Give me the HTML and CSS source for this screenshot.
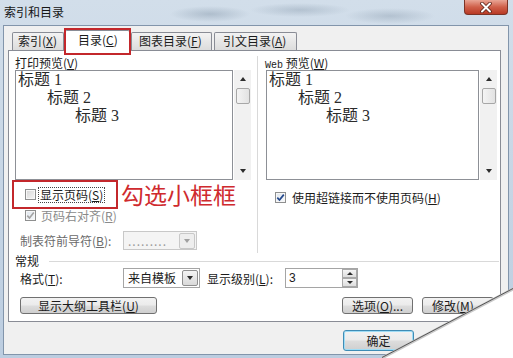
FILE: index.html
```html
<!DOCTYPE html>
<html lang="zh-CN">
<head>
  <meta charset="UTF-8">
  <title>索引和目录</title>
  <link rel="stylesheet" href="styles.css">
</head>
<body>

<div class="window">

  <!-- Title bar -->
  <div class="titlebar">
    <span class="title">索引和目录</span>
    <span class="close">
      <svg width="14" height="11" viewBox="0 0 14 11">
        <path d="M3 1.5 L11 9.5 M11 1.5 L3 9.5" stroke="#5a2218" stroke-width="3.6" stroke-linecap="round"/>
        <path d="M3 1.5 L11 9.5 M11 1.5 L3 9.5" stroke="#fff" stroke-width="2" stroke-linecap="round"/>
      </svg>
    </span>
  </div>

  <div class="client">

    <!-- Tabs -->
    <div class="tabs">
      <div class="tab tab-index">索引(<u>X</u>)</div>
      <div class="tab tab-toc active">目录(<u>C</u>)</div>
      <div class="tab tab-fig">图表目录(<u>F</u>)</div>
      <div class="tab tab-cite">引文目录(<u>A</u>)</div>
    </div>

    <div class="panel">
      <div class="previews">

        <!-- Print preview -->
        <div class="col col-print">
          <div class="label">打印预览(<u>V</u>)</div>
          <div class="preview">
            <div class="list list-print">
              <div class="lv1">标题 1</div>
              <div class="lv2">标题 2</div>
              <div class="lv3">标题 3</div>
            </div>
            <div class="scrollbar">
              <span class="arr-up"></span>
              <span class="thumb"></span>
              <span class="arr-down"></span>
            </div>
          </div>

          <div class="mark-row">
            <div class="mark">
              <span class="cb"></span>
              <span class="focus">显示页码(<u>S</u>)</span>
            </div>
            <span class="note">勾选小框框</span>
          </div>

          <div class="check-row disabled">
            <span class="cb checked">
              <svg width="9" height="9" viewBox="0 0 9 9"><path d="M1.3 4.6 L3.5 7 L7.8 1.6" fill="none" stroke="#a3a3a3" stroke-width="1.6"/></svg>
            </span>
            <span>页码右对齐(<u>R</u>)</span>
          </div>

          <div class="leader-row">
            <span class="lbl-leader">制表符前导符(<u>B</u>):</span>
            <div class="combo combo-off">
              <span class="combo-text">.........</span>
              <span class="dd-btn"><span class="arr-down"></span></span>
            </div>
          </div>
        </div>

        <div class="sep"></div>

        <!-- Web preview -->
        <div class="col col-web">
          <div class="label"><span class="mono">Web</span> 预览(<u>W</u>)</div>
          <div class="preview">
            <div class="list list-web">
              <div class="lv1">标题 1</div>
              <div class="lv2">标题 2</div>
              <div class="lv3">标题 3</div>
            </div>
            <div class="scrollbar">
              <span class="arr-up"></span>
              <span class="thumb"></span>
              <span class="arr-down"></span>
            </div>
          </div>

          <div class="check-row web-check">
            <span class="cb checked">
              <svg width="9" height="9" viewBox="0 0 9 9"><path d="M1.3 4.6 L3.5 7 L7.8 1.6" fill="none" stroke="#24488c" stroke-width="1.7"/></svg>
            </span>
            <span>使用超链接而不使用页码(<u>H</u>)</span>
          </div>
        </div>
      </div>

      <!-- General -->
      <div class="group">常规</div>

      <div class="format-row">
        <span class="lbl-format">格式(<u>T</u>):</span>
        <div class="combo">
          <span class="combo-text">来自模板</span>
          <span class="dd-btn"><span class="arr-down"></span></span>
        </div>
        <span class="lbl-level">显示级别(<u>L</u>):</span>
        <div class="spin">
          <span class="spin-text">3</span>
          <span class="spin-btns">
            <span class="spin-half"><span class="arr-up"></span></span>
            <span class="spin-half"><span class="arr-down"></span></span>
          </span>
        </div>
      </div>

      <div class="button-row">
        <button class="btn btn-outline">显示大纲工具栏(<u>U</u>)</button>
        <span class="spacer"></span>
        <button class="btn btn-opt">选项(<u>O</u>)...</button>
        <button class="btn btn-mod">修改(<u>M</u>)...</button>
      </div>
    </div>

    <div class="footer">
      <button class="btn btn-ok">确定</button>
    </div>
  </div>

  <!-- page curl -->
  <svg class="curl" width="135" height="74" viewBox="0 0 135 74">
    <polygon points="4,74 135,5 135,74" fill="#fff"/>
    <path d="M4 74 L135 5" stroke="#c9c9c9" stroke-width="3" fill="none"/>
    <path d="M4 73.5 L135 4.5" stroke="#555" stroke-width="1" fill="none"/>
  </svg>
</div>

</body>
</html>
```

FILE: styles.css
```css
* {
  box-sizing: border-box;
}

body {
  margin: 0;
  width: 513px;
  height: 358px;
  overflow: hidden;
  font-family: "Noto Sans CJK SC", sans-serif;
  font-size: 12px;
  color: #1b1b1b;
}

u {
  text-decoration: underline;
  text-underline-offset: 1px;
}

.window {
  position: relative;
  height: 358px;
  padding: 0 4px 3px 3px;
  display: flex;
  flex-direction: column;
  background:
    radial-gradient(ellipse 40px 8px at 210px 14px, rgba(110, 130, 150, 0.35), transparent),
    radial-gradient(ellipse 50px 7px at 300px 10px, rgba(110, 130, 150, 0.3), transparent),
    radial-gradient(ellipse 45px 8px at 390px 16px, rgba(110, 130, 150, 0.3), transparent),
    linear-gradient(180deg, #d2deea, #bccde0);
}

/* title bar */
.titlebar {
  height: 25px;
  display: flex;
  justify-content: space-between;
  align-items: flex-start;
}

.title {
  margin: 4px 0 0 1px;
  line-height: 16px;
  font-size: 12px;
  color: #151515;
}

.close {
  width: 44px;
  height: 15px;
  margin-right: 1px;
  border: 1px solid #7b3326;
  border-top: none;
  border-radius: 0 0 4px 4px;
  background: linear-gradient(180deg, #e9a595, #d0604a 50%, #b83a25);
  display: flex;
  align-items: center;
  justify-content: center;
}

/* client area */
.client {
  flex: 1;
  background: #f0f0f0;
  border: 1px solid #8295ab;
  padding: 0 7px 0 4px;
  display: flex;
  flex-direction: column;
}

.tabs {
  height: 25px;
  margin-bottom: -1px;
  padding-left: 4px;
  display: flex;
  align-items: flex-end;
}

.tab {
  position: relative;
  height: 18px;
  margin-bottom: 1px;
  border: 1px solid #898c95;
  border-bottom: none;
  border-radius: 2px 2px 0 0;
  background: linear-gradient(180deg, #f3f3f3, #e6e6e6 55%, #dcdcdc);
  line-height: 16px;
  white-space: nowrap;
}

.tab-index {
  width: 52px;
  padding-left: 5px;
}

.tab-toc {
  width: 65px;
  margin-left: 1px;
  padding-left: 12px;
}

.tab-fig {
  width: 81px;
  margin-left: 1px;
  padding-left: 7px;
}

.tab-cite {
  width: 83px;
  margin-left: 2px;
  padding-left: 8px;
}

.tab.active {
  height: 21px;
  margin-bottom: 0;
  background: #fff;
  z-index: 1;
  line-height: 18px;
}

.tab.active::after {
  content: "";
  position: absolute;
  left: -2px;
  right: -2px;
  top: -3px;
  bottom: -4px;
  border: 2px solid #c3272b;
}

/* panel */
.panel {
  height: 272px;
  border: 1px solid #898c95;
  background: #fff;
  padding: 5px 0 0 6px;
  display: flex;
  flex-direction: column;
}

.previews {
  height: 197px;
  display: flex;
}

.col-print {
  width: 236px;
  display: flex;
  flex-direction: column;
}

.sep {
  width: 1px;
  margin: 0 7px 0 6px;
  background: #d9d9d9;
}

.col-web {
  width: 232px;
  display: flex;
  flex-direction: column;
}

.label {
  height: 13px;
  line-height: 13px;
  margin-bottom: 1px;
  white-space: nowrap;
}

.mono {
  font-family: "Liberation Mono", monospace;
  font-size: 10px;
}

.preview {
  height: 110px;
  display: flex;
}

.list {
  border: 1px solid #8d9096;
  background: #fff;
  padding-left: 2px;
  font-family: "Liberation Serif", "Noto Sans CJK SC", serif;
  font-size: 16px;
  line-height: 18px;
  color: #2b2b2b;
  white-space: nowrap;
}

.list-print {
  width: 218px;
}

.list-web {
  width: 213px;
  margin-left: 1px;
}

.lv2 {
  padding-left: 29px;
}

.lv3 {
  padding-left: 57px;
}

.scrollbar {
  width: 17px;
  margin-left: 1px;
  background: #f1f1f1;
  display: flex;
  flex-direction: column;
  align-items: center;
}

.scrollbar .arr-up {
  margin-top: 7px;
}

.scrollbar .arr-down {
  margin-top: auto;
  margin-bottom: 7px;
}

.thumb {
  width: 14px;
  height: 16px;
  margin-top: 7px;
  border: 1px solid #a7a7a7;
  border-radius: 2px;
  background: linear-gradient(90deg, #f4f4f4, #e2e2e2);
}

.arr-up {
  width: 0;
  height: 0;
  border-left: 3.5px solid transparent;
  border-right: 3.5px solid transparent;
  border-bottom: 4px solid #2c2c2c;
}

.arr-down {
  width: 0;
  height: 0;
  border-left: 3.5px solid transparent;
  border-right: 3.5px solid transparent;
  border-top: 4px solid #2c2c2c;
}

/* checkboxes */
.cb {
  width: 11px;
  height: 11px;
  flex: none;
  border: 1px solid #8e8f8f;
  background: linear-gradient(135deg, #d5d5d5, #f6f6f6);
  box-shadow: inset 0 0 0 1px #f7f7f7;
  display: flex;
  align-items: center;
  justify-content: center;
}

.cb.checked {
  background: linear-gradient(135deg, #dfe6ee, #f7f9fb);
}

.mark-row {
  height: 29px;
  margin-left: -3px;
  display: flex;
  align-items: center;
}

.mark {
  width: 106px;
  height: 29px;
  border: 2px solid #c3272b;
  padding-left: 11px;
  display: flex;
  align-items: center;
}

.focus {
  margin-left: 3px;
  padding: 0 1px;
  line-height: 14px;
  outline: 1px dotted #444;
  white-space: nowrap;
}

.note {
  margin-left: 3px;
  font-size: 23px;
  line-height: 29px;
  color: #cf2a2e;
  white-space: nowrap;
}

.check-row {
  height: 13px;
  display: flex;
  align-items: center;
  gap: 5px;
  margin-left: 10px;
  white-space: nowrap;
}

.check-row.disabled {
  color: #8a8a8a;
}

.web-check {
  margin-top: 10px;
  height: 14px;
  margin-left: 10px;
  gap: 6px;
}

.leader-row {
  height: 19px;
  margin-top: 9px;
  margin-left: 5px;
  display: flex;
  align-items: center;
  color: #6a6a6a;
}

.lbl-leader {
  width: 103px;
  white-space: nowrap;
}

/* combos */
.combo {
  width: 77px;
  height: 20px;
  border: 1px solid #a5a5a5;
  background: #fff;
  padding: 1px;
  display: flex;
  align-items: center;
}

.combo-off {
  width: 74px;
  height: 19px;
  border-color: #c8c8c8;
  background: #f4f4f4;
}

.combo-text {
  flex: 1;
  padding-left: 3px;
  line-height: 16px;
  white-space: nowrap;
}

.combo-off .combo-text {
  color: #9a9a9a;
  letter-spacing: 1px;
}

.dd-btn {
  width: 16px;
  height: 16px;
  border: 1px solid #8f8f8f;
  border-radius: 2px;
  background: linear-gradient(180deg, #f4f4f4, #d9d9d9);
  display: flex;
  align-items: center;
  justify-content: center;
}

.combo-off .dd-btn {
  border-color: #c8c8c8;
  background: #eeeeee;
}

.combo-off .arr-down {
  border-top-color: #a0a0a0;
}

/* general group */
.group {
  height: 14px;
  margin-top: 1px;
  line-height: 14px;
  display: flex;
  align-items: center;
}

.group::after {
  content: "";
  flex: 1;
  height: 1px;
  margin: 0 1px 0 10px;
  background: #d9d9d9;
}

.format-row {
  height: 20px;
  display: flex;
  align-items: center;
  margin-left: 5px;
}

.lbl-format {
  width: 103px;
  white-space: nowrap;
}

.lbl-level {
  width: 78px;
  margin-left: 7px;
  white-space: nowrap;
}

.spin {
  width: 73px;
  height: 20px;
  border: 1px solid #a5a5a5;
  display: flex;
  align-items: stretch;
}

.spin-text {
  flex: 1;
  padding-left: 3px;
  line-height: 18px;
  font-family: "Liberation Sans", sans-serif;
}

.spin-btns {
  width: 15px;
  display: flex;
  flex-direction: column;
}

.spin-half {
  flex: 1;
  border: 1px solid #a9a9a9;
  background: linear-gradient(180deg, #f5f5f5, #dedede);
  display: flex;
  align-items: center;
  justify-content: center;
}

.spin-half .arr-up,
.spin-half .arr-down {
  border-left-width: 3px;
  border-right-width: 3px;
  border-top-width: 3px;
  border-bottom-width: 3px;
}

/* buttons */
.button-row {
  height: 17px;
  margin-top: 9px;
  margin-left: 5px;
  display: flex;
}

.spacer {
  flex: 1;
}

.btn {
  height: 17px;
  padding: 0;
  border: 1px solid #707070;
  border-radius: 3px;
  background: linear-gradient(180deg, #f2f2f2, #ebebeb 48%, #dddddd 52%, #cfcfcf);
  font-family: "Noto Sans CJK SC", sans-serif;
  font-size: 12px;
  line-height: 14px;
  color: #1b1b1b;
  white-space: nowrap;
}

.btn-outline {
  width: 137px;
}

.btn-opt {
  width: 71px;
}

.btn-mod {
  width: 72px;
  margin-left: 9px;
  margin-right: 6px;
}

.footer {
  flex: 1;
  padding-top: 8px;
  display: flex;
  justify-content: flex-end;
  align-items: flex-start;
}

.btn-ok {
  width: 71px;
  height: 21px;
  margin-right: 87px;
  border-color: #3f8cb5;
  box-shadow: inset 0 0 0 1px #9fdcf5;
  line-height: 18px;
}

.curl {
  position: absolute;
  left: 378px;
  top: 284px;
}
```
